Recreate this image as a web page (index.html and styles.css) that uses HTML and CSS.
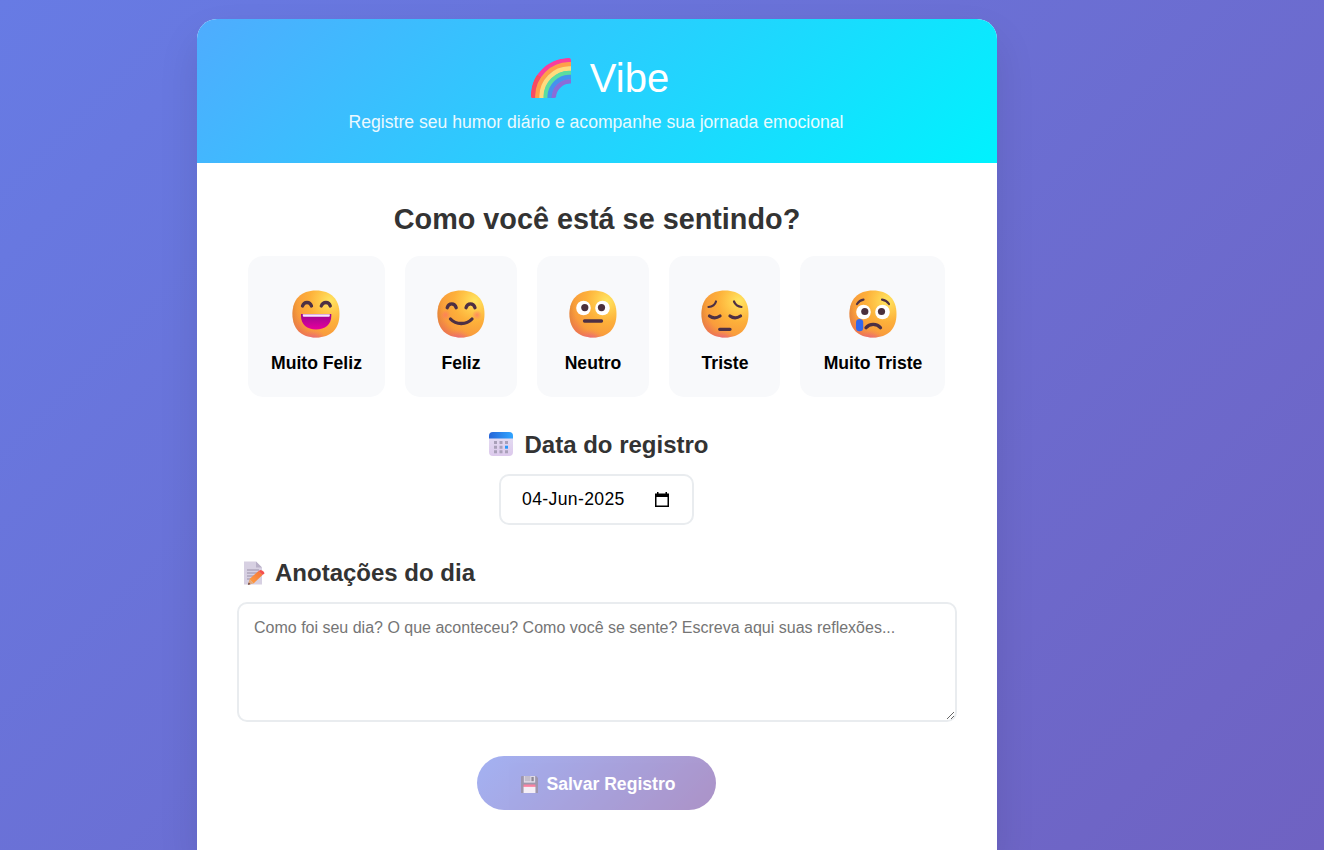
FILE: index.html
```html
<!DOCTYPE html>
<html lang="pt-BR">
<head>
<meta charset="utf-8">
<title>Vibe</title>
<link rel="stylesheet" href="styles.css">
</head>
<body>
<svg class="defs" width="0" height="0" aria-hidden="true">
  <defs>
    <radialGradient id="face" cx="0.8" cy="0.22" r="0.9">
      <stop offset="0" stop-color="#ffe561"/><stop offset="0.25" stop-color="#ffca4b"/><stop offset="0.5" stop-color="#fdb03a"/><stop offset="0.82" stop-color="#f99c3c"/><stop offset="1" stop-color="#ee7a4e"/>
    </radialGradient>
    <radialGradient id="glow" cx="0.45" cy="1.12" r="0.3">
      <stop offset="0" stop-color="#e050a8"/><stop offset="1" stop-color="#f07070" stop-opacity="0"/>
    </radialGradient>
    <linearGradient id="edge" x1="0" x2="1"><stop offset="0" stop-color="#dc8a30" stop-opacity=".6"/><stop offset="0.14" stop-color="#ee9a30" stop-opacity="0"/></linearGradient>
    <linearGradient id="mouth" x2="0" y2="1"><stop offset="0" stop-color="#9a0790"/><stop offset="1" stop-color="#e6009d"/></linearGradient>
    <radialGradient id="cheek"><stop offset="0" stop-color="#ff7566" stop-opacity=".7"/><stop offset="1" stop-color="#ff7566" stop-opacity="0"/></radialGradient>
    <linearGradient id="caltop"><stop offset="0" stop-color="#2565d8"/><stop offset="1" stop-color="#30a5ff"/></linearGradient>
    <linearGradient id="calbody" x2="0" y2="1"><stop offset="0" stop-color="#e5e0f3"/><stop offset="1" stop-color="#dcc9ec"/></linearGradient>
    <linearGradient id="pencil" x1="1" y1="0" x2="0" y2="1"><stop offset="0" stop-color="#f47237"/><stop offset="1" stop-color="#ffa143"/></linearGradient>
    <clipPath id="bow"><path d="M1 40Q0 40 0 37C0 16 17 0 38 0Q40 0 40 3V25.500C33 26 26 32 25.500 37Q25.500 40 23 40Z"/></clipPath>
    <g id="head">
      <path d="M24 .5C39 .5 47.500 9 47.500 24S39 47.500 24 47.500.5 39 .5 24 9 .5 24 .5Z" fill="url(#face)"/>
      <path d="M24 .5C39 .5 47.500 9 47.500 24S39 47.500 24 47.500.5 39 .5 24 9 .5 24 .5Z" fill="url(#edge)"/>
      <path d="M24 .5C39 .5 47.500 9 47.500 24S39 47.500 24 47.500.5 39 .5 24 9 .5 24 .5Z" fill="url(#glow)"/>
    </g>
  </defs>
</svg>
<main class="container">
  <header class="header">
    <h1 class="title">
      <svg class="rainbow" viewBox="0 0 41 41">
        <g fill="none" stroke-width="4.700" clip-path="url(#bow)">
          <path d="M2.300 41V38A36 36 0 0 1 38 2.200H41" stroke="#f93e9d"/>
          <path d="M2.300 41V38A36 36 0 0 1 8 18" stroke="#f84b61"/>
          <path d="M6.500 41V38A32 32 0 0 1 38 6.400H41" stroke="#ff9f49"/>
          <path d="M10.700 41V38A28 28 0 0 1 38 10.700H41" stroke="#ffdb7d"/>
          <path d="M14.800 41V38A24 24 0 0 1 38 15H41" stroke="#5bdda0"/>
          <path d="M18.800 41V38A20 20 0 0 1 38 19.200H41" stroke="#4493ee"/>
          <path d="M23 41V38A16 16 0 0 1 38 23.500H41" stroke="#8a6cd8"/>
        </g>
      </svg>
      <span>Vibe</span>
    </h1>
    <p class="subtitle">Registre seu humor diário e acompanhe sua jornada emocional</p>
  </header>
  <section class="content">
    <h2 class="question">Como você está se sentindo?</h2>
    <div class="moods">
      <button class="mood w-mf">
        <svg class="emoji" viewBox="0 0 48 48"><use href="#head"/>
          <path class="stroke" d="M10.500 16C12 11.300 18 11.300 19.500 16M29.300 16C31 11.300 37 11.300 38.300 16"/>
          <path d="M9 24H39.300V26C39.300 34.500 33 39.500 24 39.500S9 34.500 9 26Z" fill="url(#mouth)"/>
          <path d="M10.800 24.200H37.800V25.700Q37.800 26.700 36.800 26.700H11.800Q10.800 26.700 10.800 25.700Z" fill="#f5e8ff"/>
        </svg><span class="label">Muito Feliz</span></button>
      <button class="mood w-sm">
        <svg class="emoji" viewBox="0 0 48 48"><use href="#head"/>
          <circle cx="8.500" cy="25" r="5" fill="url(#cheek)"/><circle cx="40" cy="25" r="5" fill="url(#cheek)"/>
          <path class="stroke" d="M10.200 17.700C11.700 12.700 17.700 12.700 19.200 17.700M29 17.700C30.500 12.700 36.500 12.700 38 17.700M13.500 29C19 35 29.500 35 35 29"/>
        </svg><span class="label">Feliz</span></button>
      <button class="mood w-sm">
        <svg class="emoji" viewBox="0 0 48 48"><use href="#head"/>
          <circle cx="14.500" cy="18" r="7.300" fill="#fff"/><circle cx="33.500" cy="18" r="7.300" fill="#fff"/>
          <circle cx="15.800" cy="17.600" r="3.600" fill="#4b303c"/><circle cx="32.500" cy="17.600" r="3.600" fill="#4b303c"/>
          <path class="stroke" d="M15.500 31H32.500"/>
        </svg><span class="label">Neutro</span></button>
      <button class="mood w-tr">
        <svg class="emoji" viewBox="0 0 48 48"><use href="#head"/>
          <path class="stroke thin" d="M7.500 17Q13.500 16.500 15 11.500M33 11.500Q35 16.500 40.500 17"/>
          <path class="stroke" d="M8.500 26Q13.500 29.700 19 26M29 26Q34 29.700 39.500 26M18.700 39.300H29"/>
        </svg><span class="label">Triste</span></button>
      <button class="mood w-mt">
        <svg class="emoji" viewBox="0 0 48 48"><use href="#head"/>
          <path class="stroke thin" d="M8 14Q10.500 10.300 14.500 9.700M33 9.700Q37.500 10.300 40 14"/>
          <circle cx="14.500" cy="22" r="7.300" fill="#fff"/><circle cx="33.500" cy="22" r="7.300" fill="#fff"/>
          <circle cx="15.800" cy="21.500" r="3.600" fill="#4b303c"/><circle cx="32.500" cy="21.500" r="3.600" fill="#4b303c"/>
          <path class="stroke" d="M17 37.800C20.500 33.200 28 33.200 31.500 37.800"/>
          <rect x="7" y="29" width="7.200" height="12.300" rx="3.600" fill="#3267ed"/>
        </svg><span class="label">Muito Triste</span></button>
    </div>
    <div class="date-block">
      <h3 class="subhead">
        <svg class="icon24" viewBox="0 0 24 24">
          <rect width="24" height="24" rx="4" fill="url(#calbody)"/><path d="M0 6.500V4Q0 0 4 0H20Q24 0 24 4V6.500Z" fill="url(#caltop)"/>
          <path fill="#a9a0b9" d="M5 9h3v3H5zM10.500 9h3v3h-3zM16 9h3v3h-3zM5 13.700h3v3H5zM10.500 13.700h3v3h-3zM5 18.300h3v3H5zM10.500 18.300h3v3h-3zM16 18.300h3v3h-3z"/>
          <path d="M16 13.700h3v3h-3z" fill="#2997f8"/>
        </svg><span>Data do registro</span></h3>
      <div class="date-field"><span class="date-value">04-Jun-2025</span>
        <svg class="picker" viewBox="0 0 14 15"><path d="M.75 3H13.250V14.250H.75Z" fill="none" stroke="#000" stroke-width="1.500"/><path d="M0 1.500H14V5H0ZM2 0H3.500V2H2ZM10.500 0H12V2H10.500Z"/></svg>
      </div>
    </div>
    <div class="notes-block">
      <h3 class="subhead">
        <svg class="icon24" viewBox="0 0 24 24">
          <path d="M1 .5H13L19 6.500V23.500H1Z" fill="#d7d0e2"/><path d="M13 .5L19 6.500H13Z" fill="#b9b0c8"/>
          <path d="M4 9H16M4 12H16M4 15H12M4 18H9" stroke="#9a90a8" stroke-width="1"/>
          <path d="M6.500 18L15.500 10L19.500 14L10.500 22.500Z" fill="url(#pencil)"/>
          <path d="M15.500 10L17.500 9Q21 9.500 21.500 12.500L19.500 14Z" fill="#f4504e"/>
          <path d="M6.500 18L10.500 22.500L5 23.700Z" fill="#e4a87a"/><path d="M5.700 21.500L7.500 23.200L4.800 23.800Z" fill="#5b3a3a"/>
        </svg><span>Anotações do dia</span></h3>
      <textarea class="notes" placeholder="Como foi seu dia? O que aconteceu? Como você se sente? Escreva aqui suas reflexões..."></textarea>
    </div>
    <button class="save">
      <svg class="disk" viewBox="0 0 18 18">
        <path d="M0 1Q0 0 1 0H16L18 2V18H0Z" fill="#5f5277"/><path d="M3 0H15V7H3Z" fill="#cfc7dd"/><path d="M4 0H10V5.500H4Z" fill="#9e93ad"/><path d="M11 1H13.500V5.500H11Z" fill="#423a50"/>
        <path d="M2.700 9H15.300V12H2.700Z" fill="#f72f63"/><path d="M2.700 11.500H15.300V18H2.700Z" fill="#efe6f3"/>
      </svg><span>Salvar Registro</span></button>
  </section>
</main>
</body>
</html>
```
FILE: styles.css
```css
* { box-sizing: border-box; margin: 0; padding: 0; }
body {
  height: 850px;
  overflow: hidden;
  padding: 19px 0 0 197px;
  font-family: "Liberation Sans", Arial, sans-serif;
  color: #333;
  background: linear-gradient(135deg, #677be4 0%, #6f62c2 100%) no-repeat;
}
.defs { position: absolute; }
.container {
  width: 800px;
  height: 831px;
  background: #fff;
  border-radius: 20px 20px 0 0;
  overflow: hidden;
  box-shadow: 0 20px 40px rgba(0, 0, 0, .1);
}
.header {
  height: 144px;
  padding-top: 36px;
  color: #fff;
  text-align: center;
  background: linear-gradient(135deg, #4facfe 0%, #00f2fe 100%);
}
.title {
  display: flex;
  justify-content: center;
  gap: 18px;
  height: 46px;
  padding-left: 6px;
  line-height: 46px;
  font-size: 40px;
  font-weight: 300;
}
.rainbow { width: 41px; height: 41px; margin-top: 3px; }
.subtitle { margin-top: 11px; padding-right: 2px; font-size: 17.6px; line-height: 20px; opacity: .9; }
.content {
  display: flex;
  flex-direction: column;
  align-items: center;
  padding: 39px 41px 0 40px;
}
.question { padding-left: 1px; font-size: 28.8px; line-height: 34px; }
.moods { display: flex; gap: 20px; margin-top: 20px; }
.mood {
  display: flex;
  flex-direction: column;
  align-items: center;
  height: 141px;
  padding-top: 34px;
  border: 0;
  border-radius: 15px;
  background: #f8f9fb;
  color: #000;
  font: bold 17.6px/20px "Liberation Sans", Arial, sans-serif;
}
.w-mf { width: 137px; }
.w-sm { width: 112px; }
.w-tr { width: 111px; padding-left: 1px; }
.w-mt { width: 145px; padding-left: 1px; }
.emoji { width: 48px; height: 48px; margin-right: 1px; }
.label { margin-top: 15px; white-space: nowrap; }
.stroke { fill: none; stroke: #4d3044; stroke-width: 3.3; stroke-linecap: round; }
.thin { stroke-width: 2.2; }
.date-block { display: flex; flex-direction: column; align-items: center; margin-top: 33px; }
.subhead { display: flex; align-items: center; gap: 12px; font-size: 24px; line-height: 30px; }
.date-block .subhead { padding-left: 5px; gap: 11px; }
.icon24 { width: 24px; height: 24px; }
.date-block .icon24 { margin-bottom: 2px; }
.date-field {
  display: flex;
  align-items: center;
  justify-content: space-between;
  width: 195px;
  height: 51px;
  margin-top: 14px;
  padding: 0 23px 1px 21px;
  border: 2px solid #e9ecef;
  border-radius: 10px;
  font-size: 17.6px;
  color: #000;
}
.date-value { letter-spacing: .36px; }
.picker { width: 14px; height: 15px; }
.notes-block { width: 100%; margin-top: 33px; }
.notes-block .subhead { padding-left: 6px; gap: 8px; }
.notes {
  display: block;
  width: 720px;
  height: 120px;
  margin-top: 14px;
  padding: 15px;
  border: 2px solid #e9ecef;
  border-radius: 10px;
  resize: vertical;
  font: 16px "Liberation Sans", Arial, sans-serif;
}
.save {
  display: flex;
  align-items: center;
  justify-content: center;
  gap: 8px;
  width: 239px;
  height: 54px;
  margin-top: 34px;
  padding: 2px 0 0 3px;
  border: 0;
  border-radius: 27px;
  color: #fff;
  background: linear-gradient(135deg, #667eea 0%, #764ba2 100%);
  opacity: .6;
  font: bold 17.6px "Liberation Sans", Arial, sans-serif;
}
.disk { width: 17px; height: 17px; margin-left: 1px; }
```
